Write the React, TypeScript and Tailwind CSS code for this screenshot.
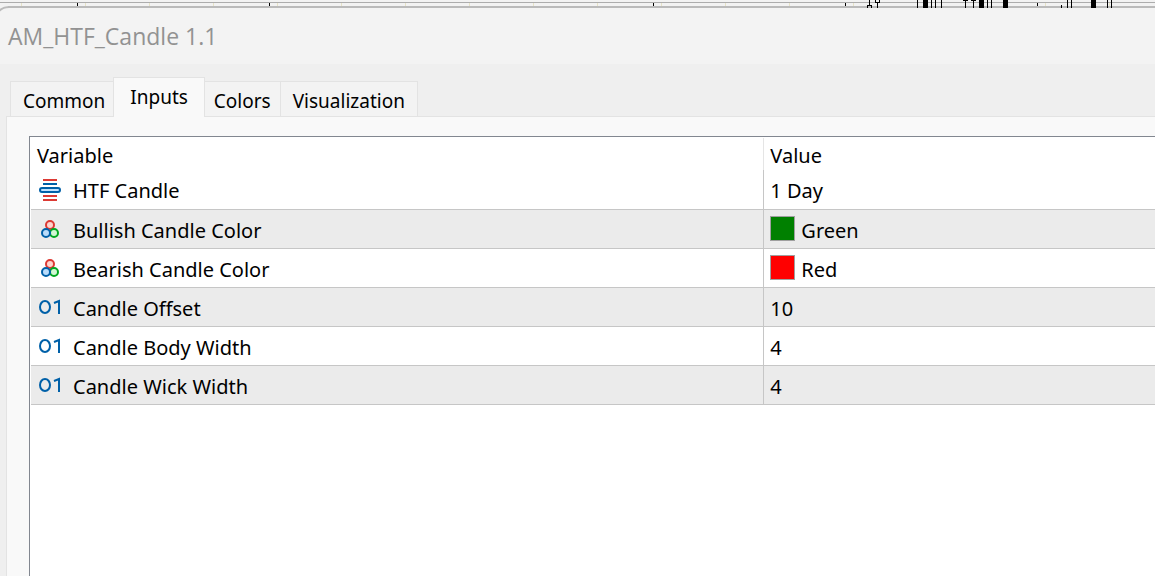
import { useState } from "react";
import type { ReactNode } from "react";

type IconKind = "timeframe" | "color" | "number";

interface InputRow {
  icon: IconKind;
  name: string;
  value: string;
  swatch?: string;
}

const tabs = ["Common", "Inputs", "Colors", "Visualization"];

const rows: InputRow[] = [
  { icon: "timeframe", name: "HTF Candle", value: "1 Day" },
  { icon: "color", name: "Bullish Candle Color", value: "Green", swatch: "bg-[#008000]" },
  { icon: "color", name: "Bearish Candle Color", value: "Red", swatch: "bg-[#ff0000]" },
  { icon: "number", name: "Candle Offset", value: "10" },
  { icon: "number", name: "Candle Body Width", value: "4" },
  { icon: "number", name: "Candle Wick Width", value: "4" },
];

const icons: Record<IconKind, ReactNode> = {
  timeframe: (
    <svg className="overflow-visible" width="22" height="22" viewBox="0 0 22 22" aria-hidden="true">
      <path d="M4 2h14M4 18h14M4 22h14" stroke="#dc3a34" strokeWidth="2" />
      <path d="M4 6h14" stroke="#0060a8" strokeWidth="2" />
      <rect x="1" y="10" width="20" height="4" rx="2" fill="#bfe2ff" stroke="#0060a8" strokeWidth="2" />
    </svg>
  ),
  color: (
    <svg width="22" height="22" viewBox="0 0 22 22" aria-hidden="true">
      <circle cx="11" cy="7" r="4" fill="#ffd3cd" stroke="#dc3a34" strokeWidth="2" />
      <circle cx="15" cy="15" r="4" fill="#d2f8d4" stroke="#00a820" strokeWidth="2" />
      <circle cx="7" cy="15" r="4" fill="#b9dcfb" stroke="#0060a8" strokeWidth="2" />
    </svg>
  ),
  number: (
    <svg width="22" height="22" viewBox="0 0 22 22" aria-hidden="true" fill="none" stroke="#0060a8" strokeWidth="2">
      <ellipse cx="6" cy="11" rx="5" ry="6" />
      <path d="M15 7l5-2v13" />
    </svg>
  ),
};

const wicks = [917, 931, 935, 941, 987, 991, 1067, 1071, 1107, 1111];
const bodies = [923, 979, 1003, 1091];
const marks = [77, 269, 653, 845, 1037];

// Bottom edge of the price chart that shows above the dialog
const ChartStrip = () => (
  <svg className="relative block h-2 w-full overflow-visible bg-[#f2f2f2]" aria-hidden="true">
    <g shapeRendering="crispEdges">
      <rect y="2" width="100%" height="1" fill="#acacac" />
      {Array.from({ length: 18 }, (_, i) => (
        <rect key={i} x={21 + i * 64} y="3" width="1" height="3" fill="#e6e2c8" />
      ))}
      <rect x="8" y="6" width="100%" height="2" fill="#bababa" />
      {marks.map((x) => (
        <rect key={x} x={x} y="3" width="1" height="3" />
      ))}
      {wicks.map((x) => (
        <rect key={x} x={x} width="1" height="8" />
      ))}
      {bodies.map((x) => (
        <rect key={x} x={x} width="5" height="8" />
      ))}
      <path d="M869 0h1v5h2v3h-1v-2h-3v2h-1v-3h2zM875 0h1v2h3v-2h1v3h-2v5h-1v-5h-2zM963 0h5v1h-2v7h-1v-7h-2zM971 0h5v1h-2v7h-1v-7h-2zM1061 5h1v3h-1z" />
    </g>
    <path d="M-1 11Q3 7 9 7" fill="none" stroke="#bababa" strokeWidth="2" />
  </svg>
);

const App = () => {
  const [active, setActive] = useState("Inputs");

  return (
    <div className="flex min-h-screen w-full flex-col overflow-hidden bg-[#efefef] font-['Noto_Sans',sans-serif] text-xl text-black">
      <ChartStrip />
      <header className="flex h-14 items-center bg-[#f3f3f3] px-2">
        <h1 className="font-['Open_Sans',sans-serif] text-[23px] text-[#929292]">AM_HTF_Candle 1.1</h1>
      </header>

      <div className="flex grow flex-col pt-[13px] pl-[6px]">
        <div role="tablist" className="z-10 -mb-px flex items-end pl-1 text-[19px]">
          {tabs.map((tab) => (
            <button
              key={tab}
              role="tab"
              aria-selected={tab === active}
              onClick={() => setActive(tab)}
              className={
                tab === active
                  ? "h-10 border border-b-0 border-[#e3e3e3] bg-[#f9f9f9] px-4"
                  : "h-9 border border-r-0 border-[#e3e3e3] bg-[#f3f3f3] px-3 pt-1 first:pr-2 first:pl-3 last:border-r nth-3:border-l-0 nth-3:px-[9px]"
              }
            >
              {tab}
            </button>
          ))}
        </div>

        <div role="tabpanel" className="flex grow flex-col border-t border-l border-[#e3e3e3] bg-[#f9f9f9] pt-[19px] pl-[22px]">
          <div className="grow border-t border-l border-[#828790] bg-white pt-px pl-px">
            <table className="w-full table-fixed border-collapse text-left">
              <thead>
                <tr className="h-8">
                  <th className="w-[65.2%] border-r border-[#e5e5e5] p-0 pt-1 pl-[6px] font-normal">Variable</th>
                  <th className="p-0 pt-1 pl-[6px] font-normal">Value</th>
                </tr>
              </thead>
              <tbody>
                {rows.map((row) => (
                  <tr key={row.name} className="h-[39px] border-b border-[#c6c6c6] even:bg-[#ebebeb]">
                    <td className="border-r border-[#c6c6c6] p-0 pl-2">
                      <div className="flex items-center gap-3">
                        {icons[row.icon]}
                        <span className="pt-1">{row.name}</span>
                      </div>
                    </td>
                    <td className="p-0 pl-[6px]">
                      <div className="flex items-center gap-[6px]">
                        {row.swatch && <span className={`size-[25px] border border-[#a0a0a0] ${row.swatch}`} />}
                        <span className="pt-1">{row.value}</span>
                      </div>
                    </td>
                  </tr>
                ))}
              </tbody>
            </table>
          </div>
        </div>
      </div>
    </div>
  );
};

export default App;
